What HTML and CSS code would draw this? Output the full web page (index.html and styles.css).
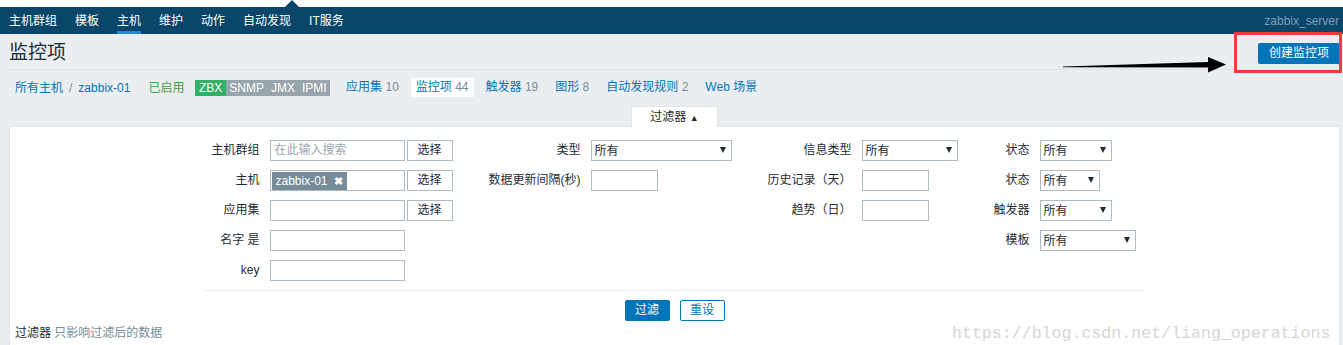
FILE: index.html
```html
<!DOCTYPE html>
<html lang="zh-CN">
<head>
<meta charset="utf-8">
<title>监控项</title>
<link rel="stylesheet" href="styles.css">
</head>
<body>
<div class="topstrip"><span class="notch"></span></div>
<nav class="topnav">
  <ul class="menu">
    <li>主机群组</li>
    <li>模板</li>
    <li class="active">主机</li>
    <li>维护</li>
    <li>动作</li>
    <li>自动发现</li>
    <li>IT服务</li>
  </ul>
  <span class="user">zabbix_server</span>
</nav>
<div class="page">
  <header class="head">
    <h1>监控项</h1>
    <button class="btn-primary">创建监控项</button>
  </header>
  <div class="crumbs">
    <a class="link">所有主机</a><span class="sep">/</span><a class="link">zabbix-01</a>
    <span class="enabled">已启用</span>
    <span class="chips"><span class="chip green">ZBX</span><span class="chip">SNMP</span><span class="chip">JMX</span><span class="chip">IPMI</span></span>
    <ul class="subnav">
      <li><a class="link">应用集</a> <span class="count">10</span></li>
      <li class="current"><a class="link">监控项</a> <span class="count">44</span></li>
      <li><a class="link">触发器</a> <span class="count">19</span></li>
      <li><a class="link">图形</a> <span class="count">8</span></li>
      <li><a class="link">自动发现规则</a> <span class="count">2</span></li>
      <li><a class="link">Web 场景</a></li>
    </ul>
  </div>
  <div class="tab-row"><span class="filter-tab">过滤器 <span class="up">▲</span></span></div>
  <section class="panel">
    <div class="grid">
      <div class="lbl">主机群组</div>
      <div class="field"><div class="input w135 ph">在此输入搜索</div><button class="btn-sel">选择</button></div>
      <div class="lbl">类型</div>
      <div class="field"><div class="select w141"><span>所有</span><i class="caret"></i></div></div>
      <div class="lbl">信息类型</div>
      <div class="field"><div class="select w96"><span>所有</span><i class="caret"></i></div></div>
      <div class="lbl">状态</div>
      <div class="field"><div class="select w72"><span>所有</span><i class="caret"></i></div></div>

      <div class="lbl">主机</div>
      <div class="field"><div class="input w135 tagbox"><span class="tag">zabbix-01 <b>✖</b></span></div><button class="btn-sel">选择</button></div>
      <div class="lbl">数据更新间隔(秒)</div>
      <div class="field"><div class="input w67"></div></div>
      <div class="lbl">历史记录（天）</div>
      <div class="field"><div class="input w67"></div></div>
      <div class="lbl">状态</div>
      <div class="field"><div class="select w60"><span>所有</span><i class="caret"></i></div></div>

      <div class="lbl">应用集</div>
      <div class="field"><div class="input w135"></div><button class="btn-sel">选择</button></div>
      <div></div>
      <div></div>
      <div class="lbl">趋势（日）</div>
      <div class="field"><div class="input w67"></div></div>
      <div class="lbl">触发器</div>
      <div class="field"><div class="select w72"><span>所有</span><i class="caret"></i></div></div>

      <div class="lbl">名字 是</div>
      <div class="field"><div class="input w135"></div></div>
      <div></div><div></div><div></div><div></div>
      <div class="lbl">模板</div>
      <div class="field"><div class="select w96"><span>所有</span><i class="caret"></i></div></div>

      <div class="lbl">key</div>
      <div class="field"><div class="input w135"></div></div>
      <div></div><div></div><div></div><div></div><div></div><div></div>
    </div>
    <div class="filter-sep"></div>
    <div class="filter-buttons">
      <button class="btn-apply">过滤</button>
      <button class="btn-reset">重设</button>
    </div>
    <p class="note"><span class="dark">过滤器</span> 只影响过滤后的数据</p>
  </section>
</div>
<div class="redbox"></div>
<svg class="arrow" width="170" height="20" viewBox="1060 56 170 20">
  <polygon points="1063,66.5 1208,62 1208,57 1226,64.5 1208,72.5 1208,67.5 1063,67.3" fill="#000"/>
</svg>
<div class="watermark">https://blog.csdn.net/liang_operations</div>
</body>
</html>
```

FILE: styles.css
```css
html, body {
  margin: 0;
  padding: 0;
}
body {
  position: relative;
  width: 1343px;
  height: 345px;
  overflow: hidden;
  background: #ebeef0;
  font: 12px/14px "Liberation Sans", "Noto Sans CJK SC", sans-serif;
  color: #1f2c33;
}

.topstrip {
  position: relative;
  height: 7px;
  background: #fff;
}
.notch {
  position: absolute;
  left: 285px;
  top: 0;
  width: 0;
  height: 0;
  border-left: 7.5px solid transparent;
  border-right: 7.5px solid transparent;
  border-bottom: 7px solid #0a466a;
}

.topnav {
  display: flex;
  height: 27px;
  background: #0a466a;
  padding: 0 4px 0 9px;
}
.menu {
  display: flex;
  gap: 18px;
  list-style: none;
  margin: 0;
  padding: 0;
}
.menu li {
  display: flex;
  align-items: center;
  height: 27px;
  box-sizing: border-box;
  padding-top: 1px;
  color: #fff;
}
.menu li.active {
  box-shadow: inset 0 -3px 0 #1f8ad2;
}
.user {
  margin-left: auto;
  align-self: center;
  color: #7f9db3;
  padding-top: 1px;
}

.page {
  padding: 0 3px 0 9px;
}
.head {
  display: flex;
  align-items: center;
  justify-content: space-between;
  height: 36px;
  box-sizing: border-box;
  padding-top: 3px;
  border-bottom: 1px solid #dde3e6;
}
.head h1 {
  margin: 0;
  font-size: 19px;
  line-height: 24px;
  font-weight: normal;
  color: #1f2c33;
}
.btn-primary {
  height: 21px;
  padding: 0 11px;
  border: 0;
  border-radius: 2px;
  background: #0275b8;
  color: #fff;
  font: inherit;
  line-height: 21px;
}

.crumbs {
  display: flex;
  align-items: center;
  height: 19px;
  margin-top: 8px;
  padding-left: 6px;
}
.link {
  color: #0275b8;
}
.sep {
  margin: 0 6px;
  color: #768d99;
}
.enabled {
  margin-left: 18px;
  color: #429e47;
}
.chips {
  display: flex;
  margin-left: 11px;
}
.chip {
  height: 16px;
  line-height: 16px;
  padding: 0 3.5px;
  background: #98a5ac;
  color: #fff;
}
.chip.green {
  background: #34af67;
}
.subnav {
  display: flex;
  gap: 7px;
  list-style: none;
  margin: 0 0 0 11px;
  padding: 0;
}
.subnav li {
  height: 19px;
  line-height: 19px;
  padding: 0 5px;
  white-space: nowrap;
}
.subnav li.current {
  background: #fff;
}
.count {
  color: #768d99;
}

.tab-row {
  display: flex;
  justify-content: center;
  margin-top: 9px;
}
.filter-tab {
  position: relative;
  z-index: 1;
  height: 21px;
  box-sizing: border-box;
  margin-bottom: -1px;
  padding: 0 18px;
  border: 1px solid #dfe4e7;
  border-bottom: 0;
  background: #fff;
  line-height: 20px;
}
.up {
  font-size: 9px;
}

.panel {
  height: 240px;
  border: 1px solid #dfe4e7;
  background: #fff;
  padding-top: 13px;
}
.grid {
  display: grid;
  grid-template-columns: 66px 200px 121px 169px 102px 118px 60px 106px;
  grid-auto-rows: 21px;
  row-gap: 9px;
  width: 942px;
  margin: 0 auto;
}
.lbl {
  padding-right: 10px;
  text-align: right;
  line-height: 21px;
  white-space: nowrap;
}
.field {
  display: flex;
  gap: 2px;
  align-items: center;
}
.input,
.select {
  height: 21px;
  box-sizing: border-box;
  border: 1px solid #acbbc4;
  background: #fff;
}
.w135 { width: 135px; }
.w141 { width: 141px; }
.w96 { width: 96px; }
.w72 { width: 72px; }
.w67 { width: 67px; }
.w60 { width: 60px; }
.ph {
  padding-left: 4px;
  line-height: 19px;
  color: #9aa7af;
}
.tagbox {
  display: flex;
  align-items: center;
  padding-left: 1px;
}
.tag {
  height: 18px;
  line-height: 18px;
  padding: 0 4px 0 4px;
  background: #768d99;
  color: #fff;
  white-space: nowrap;
}
.tag b {
  margin-left: 3px;
  font-size: 11px;
}
.btn-sel {
  width: 46px;
  height: 21px;
  padding: 0;
  border: 1px solid #acbbc4;
  background: #fff;
  color: #1f2c33;
  font: inherit;
  line-height: 19px;
}
.select {
  display: flex;
  align-items: center;
  justify-content: space-between;
  padding: 1px 5px 0 3px;
  line-height: 18px;
}
.caret {
  width: 0;
  height: 0;
  border-left: 3.5px solid transparent;
  border-right: 3.5px solid transparent;
  border-top: 6px solid #1f2c33;
  margin-top: -2px;
}

.filter-sep {
  width: 942px;
  margin: 9px auto 0;
  border-top: 1px solid #ebeef0;
}
.filter-buttons {
  display: flex;
  justify-content: center;
  gap: 10px;
  margin-top: 9px;
}
.btn-apply,
.btn-reset {
  width: 45px;
  height: 21px;
  padding: 0;
  border-radius: 2px;
  font: inherit;
  line-height: 19px;
}
.btn-apply {
  border: 1px solid #0275b8;
  background: #0275b8;
  color: #fff;
}
.btn-reset {
  border: 1px solid #0275b8;
  background: #fff;
  color: #0275b8;
}
.note {
  margin: 5px 0 0;
  padding-left: 5px;
  line-height: 14px;
  color: #768d99;
}
.note .dark {
  color: #1f2c33;
}

.redbox {
  position: absolute;
  left: 1234px;
  top: 32px;
  width: 108px;
  height: 41px;
  box-sizing: border-box;
  border: 3px solid #f43a3a;
}
.arrow {
  position: absolute;
  left: 1060px;
  top: 56px;
}
.watermark {
  position: absolute;
  left: 952px;
  top: 324px;
  font: 16.6px/20px "Liberation Mono", monospace;
  color: #d6d6d6;
  white-space: nowrap;
}
```
